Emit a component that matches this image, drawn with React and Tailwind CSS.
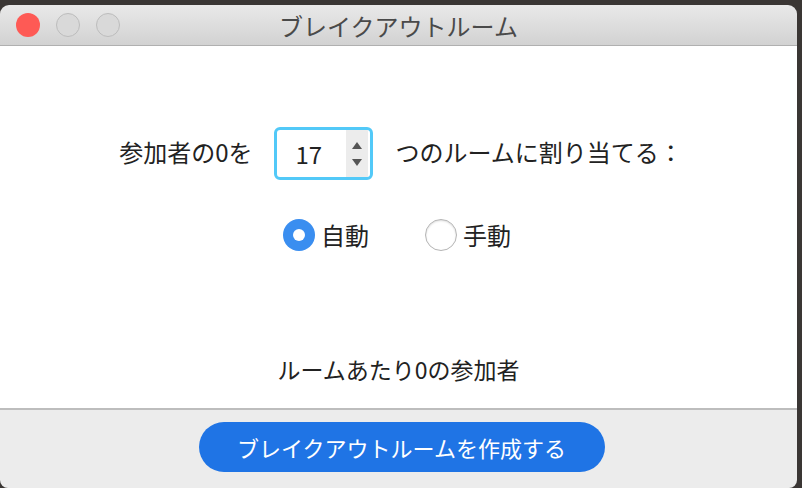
import React from "react";

const font = { fontFamily: '"Noto Sans CJK JP", "Noto Sans", sans-serif' };

function Radio({ checked, label }) {
  return (
    <div className="flex items-center gap-[6px]">
      {checked ? (
        <div className="w-[32px] h-[32px] rounded-full bg-[#3a8ef0] flex items-center justify-center">
          <div className="w-[12px] h-[12px] rounded-full bg-white" />
        </div>
      ) : (
        <div className="w-[32px] h-[32px] rounded-full bg-white border border-[#b5b5b5] shadow-[inset_0_1px_2px_rgba(0,0,0,0.15)]" />
      )}
      <span className="text-[24px] leading-none text-[#222]">{label}</span>
    </div>
  );
}

export default function App() {
  return (
    <div className="w-[802px] h-[488px] bg-[#3a3634] pt-[5px] pr-[5px] overflow-hidden" style={font}>
      <div className="w-[797px] h-[483px] flex flex-col rounded-t-[9px] rounded-b-[8px] overflow-hidden">
        {/* Title bar */}
        <div className="relative h-[41px] shrink-0 bg-gradient-to-b from-[#e9e9e9] to-[#d2d2d2] border-b border-[#b0b0b0] flex items-center justify-center">
          <div className="absolute left-[16px] top-[8px] flex gap-[16px]">
            <div className="w-[24px] h-[24px] rounded-full bg-[#fe5a55]" />
            <div className="w-[24px] h-[24px] rounded-full border border-[#bcbcbc] bg-[#d9d9d9]" />
            <div className="w-[24px] h-[24px] rounded-full border border-[#bcbcbc] bg-[#d9d9d9]" />
          </div>
          <span className="text-[24px] text-[#4a4a4a] leading-none mt-[1px]">ブレイクアウトルーム</span>
        </div>

        {/* Content */}
        <div className="flex-1 bg-white flex flex-col items-center">
          <div className="flex items-center mt-[81px] h-[53px] ml-[5px]">
            <span className="text-[24px] leading-none text-[#222] mb-[3px]">参加者の0を</span>
            <div className="ml-[21px] w-[99px] h-[53px] rounded-[6px] border-[3px] border-[#52c9f8] flex overflow-hidden">
              <div className="flex-1 flex items-center pl-[19px] text-[24px] leading-none text-[#222]">17</div>
              <div className="w-[22px] bg-[#ececec] flex flex-col items-center justify-center gap-[10px] mr-[2px]">
                <div className="w-0 h-0 border-l-[5px] border-r-[5px] border-b-[7px] border-l-transparent border-r-transparent border-b-[#555]" />
                <div className="w-0 h-0 border-l-[5px] border-r-[5px] border-t-[7px] border-l-transparent border-r-transparent border-t-[#555]" />
              </div>
            </div>
            <span className="ml-[23px] text-[24px] leading-none text-[#222] mb-[3px]">つのルームに割り当てる：</span>
          </div>

          <div className="flex items-center gap-[56px] mt-[39px] ml-[-3px] h-[32px]">
            <Radio checked label="自動" />
            <Radio label="手動" />
          </div>

          <div className="mt-[107px] text-[23px] leading-none text-[#222]">ルームあたり0の参加者</div>
        </div>

        {/* Footer */}
        <div className="h-[80px] shrink-0 bg-[#ececec] border-t-2 border-[#bdbdbd] flex justify-center pt-[12px]">
          <button className="ml-[6px] w-[406px] h-[50px] rounded-full bg-[#1f74e5] text-white text-[22px]">
            ブレイクアウトルームを作成する
          </button>
        </div>
      </div>
    </div>
  );
}
